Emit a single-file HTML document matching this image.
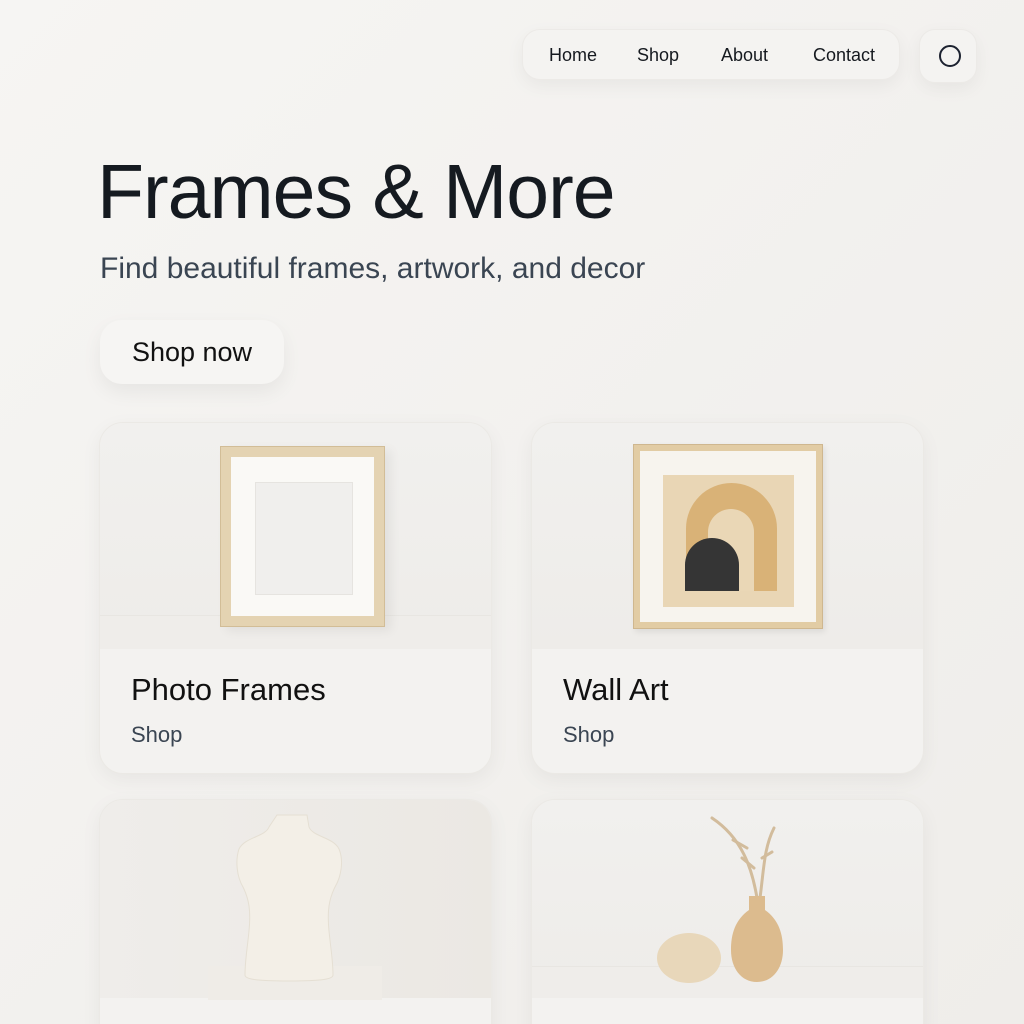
<!DOCTYPE html>
<html><head><meta charset="utf-8"><style>
*{margin:0;padding:0;box-sizing:border-box}
html,body{width:1024px;height:1024px;overflow:hidden;background:#f2f1ee}
body{background:linear-gradient(135deg,#f6f5f3,#efedea);font-family:"Liberation Sans",sans-serif;position:relative;color:#15191f}
.nav{position:absolute;left:522px;top:29px;width:378px;height:51px;border-radius:18px;background:#f4f3f1;box-shadow:0 6px 18px rgba(0,0,0,.05);border:1px solid #eceae7}
.nav span{position:absolute;top:15px;font-size:18px;color:#15191f}
.circ{position:absolute;left:919px;top:29px;width:58px;height:54px;border-radius:16px;background:#f4f3f1;box-shadow:0 6px 18px rgba(0,0,0,.05);border:1px solid #eceae7}
.circ div{position:absolute;left:19px;top:15px;width:22px;height:22px;border:2px solid #1c2230;border-radius:50%}
h1{position:absolute;left:97px;top:148px;font-size:77px;font-weight:400;letter-spacing:-1px;color:#151a20}
.sub{position:absolute;left:100px;top:252px;font-size:30px;color:#3a4552}
.btn{position:absolute;left:100px;top:320px;width:184px;height:64px;border-radius:22px;background:#f6f5f3;box-shadow:0 8px 20px rgba(0,0,0,.06);font-size:27px;line-height:64px;text-align:center;color:#111}
.card{position:absolute;width:393px;border-radius:24px;background:#f3f2f0;box-shadow:0 6px 20px rgba(0,0,0,.05);overflow:hidden;border:1px solid #ebe9e5}
.img{position:absolute;left:0;top:0;width:100%;height:226px;background:linear-gradient(#f1f0ee,#eeece9)}
.shelf{position:absolute;left:0;width:100%;bottom:0;background:#efedea;border-top:1px solid #e8e6e2}
.t{position:absolute;left:31px;top:249px;font-size:31px;color:#111}
.s{position:absolute;left:31px;top:299px;font-size:22px;color:#3a4552}
</style></head><body>
<div class="nav"><span style="left:26px">Home</span><span style="left:114px">Shop</span><span style="left:198px">About</span><span style="left:290px">Contact</span></div>
<div class="circ"><div></div></div>
<h1>Frames &amp; More</h1>
<div class="sub">Find beautiful frames, artwork, and decor</div>
<div class="btn">Shop now</div>

<div class="card" style="left:99px;top:422px;height:352px">
<div class="img"><div class="shelf" style="height:34px"></div>
<div style="position:absolute;left:120px;top:23px;width:165px;height:181px;background:#e4d3b2;border:1px solid #d2bd97;box-shadow:6px 4px 10px rgba(0,0,0,.06)">
<div style="position:absolute;left:10px;top:10px;right:10px;bottom:10px;background:#faf9f6"><div style="position:absolute;left:24px;top:25px;width:98px;height:113px;background:#f0efed;border:1px solid #e6e4e0"></div></div></div>
</div>
<div class="t">Photo Frames</div><div class="s">Shop</div></div>

<div class="card" style="left:531px;top:422px;height:352px">
<div class="img">
<div style="position:absolute;left:101px;top:21px;width:190px;height:185px;background:#e2cca4;border:1px solid #cfb78f;box-shadow:2px 3px 6px rgba(0,0,0,.08)">
<div style="position:absolute;left:6px;top:6px;right:6px;bottom:6px;background:#f7f4ee">
<div style="position:absolute;left:23px;top:24px;width:131px;height:132px;background:#e9d6b5">
<div style="position:absolute;left:23px;top:8px;width:91px;height:108px;background:#d9b277;border-radius:46px 46px 0 0"></div>
<div style="position:absolute;left:45px;top:34px;width:46px;height:82px;background:#ead7b6;border-radius:23px 23px 0 0"></div>
<div style="position:absolute;left:22px;top:63px;width:54px;height:53px;background:#353535;border-radius:27px 27px 0 0"></div>
</div></div></div></div>
<div class="t">Wall Art</div><div class="s">Shop</div></div>

<div class="card" style="left:99px;top:799px;height:260px">
<div class="img" style="height:198px;background:linear-gradient(90deg,#efedea,#ebe8e3)">
<div style="position:absolute;left:108px;top:166px;width:174px;height:34px;background:#efece7"></div>
<svg style="position:absolute;left:125px;top:12px" width="140" height="175" viewBox="0 0 140 175"><path d="M52 3h30l2 12c4 10 24 10 30 22 5 12 2 28-4 38-6 12-8 24-6 44 2 20 4 30 4 44 0 4-10 6-44 6S20 167 20 163c0-14 2-24 4-44 2-20 0-32-6-44-6-10-8-26-4-38 6-12 26-12 30-22z" fill="#f3efe7" stroke="#e5dfd3"/></svg>
</div></div>

<div class="card" style="left:531px;top:799px;height:260px">
<div class="img" style="height:198px"><div class="shelf" style="height:32px"></div>
<svg style="position:absolute;left:120px;top:8px" width="180" height="180" viewBox="0 0 180 180">
<g stroke="#d2bc9c" stroke-width="3" fill="none" stroke-linecap="round"><path d="M105 90C100 60 90 30 60 10"/><path d="M108 90C112 60 112 40 122 20"/><path d="M102 60l-12-10M95 40l-14-8M110 50l10-6"/></g>
<ellipse cx="37" cy="150" rx="32" ry="25" fill="#e8d7ba"/>
<path d="M97 88h16v14c14 10 18 24 18 40 0 18-10 32-26 32s-26-14-26-32c0-16 4-30 18-40z" fill="#dcbb8e"/>
</svg></div></div>
</body></html>
